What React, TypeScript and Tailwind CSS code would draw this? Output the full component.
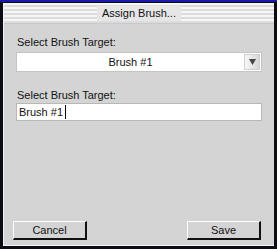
export default function App() {
  return (
    <div className="w-[277px] h-[249px] bg-[#0c0b16] border-t-2 border-[#1a1aa8] pt-px pl-[3px] pr-[3px] pb-[3px] font-['Liberation_Sans',Arial,sans-serif] text-[11px] text-[#111]">
      <div className="flex flex-col h-full bg-[#d4d4d4] border-l border-b border-[#f4f4f4]">
        {/* title bar */}
        <div className="h-[21px] flex items-center justify-center bg-[repeating-linear-gradient(to_bottom,#f6f6f6_0px,#f6f6f6_2px,#dcdcdc_2px,#dcdcdc_4px)] border-b border-[#c8c8c8]">
          <span className="bg-[#e6e6e6] px-[5px] leading-[15px] text-[11px] text-[#111]">Assign Brush...</span>
        </div>

        <div className="flex flex-col flex-1 px-[12px] pt-[11px] pb-[5px]">
          <label className="pl-px leading-[14px]">Select Brush Target:</label>
          <div className="mt-[3px] h-[20px] flex bg-white border border-[#c4c4c4]">
            <div className="flex-1 flex items-center justify-center leading-[14px]">Brush #1</div>
            <div className="w-[16px] my-px mr-px flex items-center justify-center border border-[#d0d0d0] bg-[linear-gradient(to_right,#f8f8f8,#d6d6d6)]">
              <svg width="7" height="6" viewBox="0 0 7 6">
                <path d="M0 0 H7 L3.5 6 Z" fill="#444" />
              </svg>
            </div>
          </div>

          <label className="mt-[16px] pl-px leading-[14px]">Select Brush Target:</label>
          <div className="mt-px h-[18px] flex items-center bg-white border border-[#b8b8b8] pl-[2px] leading-[14px]">
            <span>Brush #1</span>
            <span className="ml-[2px] w-px h-[14px] bg-black" />
          </div>

          <div className="mt-auto flex justify-between">
            <button className="-ml-[3px] w-[74px] h-[19px] bg-[#d4d4d4] border-t border-l border-white border-r-2 border-b-2 border-r-[#111] border-b-[#111] leading-[14px] text-[11px] text-[#111]">
              Cancel
            </button>
            <button className="mr-[1px] w-[74px] h-[19px] bg-[#d4d4d4] border-t border-l border-white border-r-2 border-b-2 border-r-[#111] border-b-[#111] leading-[14px] text-[11px] text-[#111]">
              Save
            </button>
          </div>
        </div>
      </div>
    </div>
  );
}
